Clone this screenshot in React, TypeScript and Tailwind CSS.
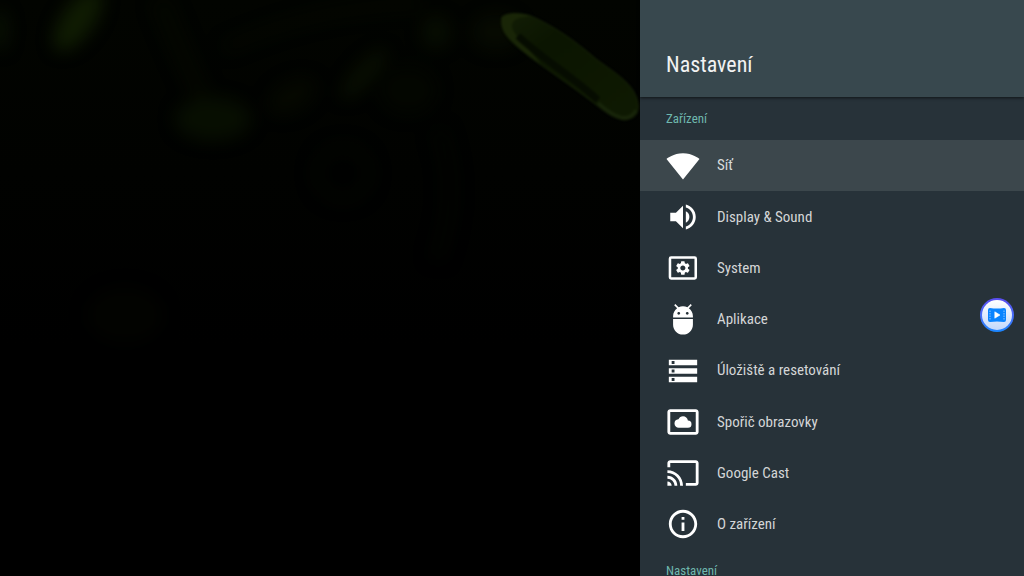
import type { ReactNode } from "react";
import {
  MdAdb,
  MdCast,
  MdInfoOutline,
  MdSettings,
  MdSettingsSystemDaydream,
  MdSignalWifi4Bar,
  MdStorage,
  MdVolumeUp,
} from "react-icons/md";

function SystemIcon() {
  return (
    <svg viewBox="0 0 24 24" className="size-[34px]" fill="currentColor" aria-hidden="true">
      <rect x="2.8" y="4.6" width="18.2" height="14.8" rx="0.8" fill="none" stroke="currentColor" strokeWidth="1.8" />
      <MdSettings x="5.9" y="6" size={12} />
    </svg>
  );
}

const items: { label: string; icon: ReactNode }[] = [
  { label: "Síť", icon: <MdSignalWifi4Bar size={34} /> },
  { label: "Display & Sound", icon: <MdVolumeUp size={34} /> },
  { label: "System", icon: <SystemIcon /> },
  { label: "Aplikace", icon: <MdAdb size={34} /> },
  { label: "Úložiště a resetování", icon: <MdStorage size={34} /> },
  { label: "Spořič obrazovky", icon: <MdSettingsSystemDaydream size={34} /> },
  { label: "Google Cast", icon: <MdCast size={34} /> },
  { label: "O zařízení", icon: <MdInfoOutline size={34} /> },
];

function Backdrop() {
  return (
    <svg
      viewBox="0 0 640 576"
      preserveAspectRatio="xMidYMin slice"
      className="h-full w-full"
      aria-hidden="true"
    >
      <defs>
        <filter
          id="soft"
          filterUnits="userSpaceOnUse"
          x="-40"
          y="-40"
          width="720"
          height="460"
          colorInterpolationFilters="sRGB"
        >
          <feGaussianBlur stdDeviation="8" />
        </filter>
        <filter id="edge" colorInterpolationFilters="sRGB">
          <feGaussianBlur stdDeviation="1" />
        </filter>
        <linearGradient id="haze" x1="0" y1="0" x2="0" y2="1">
          <stop offset="0" stopColor="#020400" />
          <stop offset="0.6" stopColor="#000000" />
        </linearGradient>
        <linearGradient id="leaf" x1="0" y1="0" x2="1" y2="1">
          <stop offset="0" stopColor="#131e06" />
          <stop offset="0.3" stopColor="#0b1501" />
          <stop offset="1" stopColor="#0f1a02" />
        </linearGradient>
      </defs>
      <rect width="640" height="576" fill="url(#haze)" />
      <g filter="url(#soft)">
        <ellipse cx="78" cy="20" rx="16" ry="36" transform="rotate(35 78 20)" fill="#0f1b02" />
        <ellipse cx="0" cy="30" rx="8" ry="20" fill="#081002" />
        <path d="M160 0 Q178 48 208 110" stroke="#040700" strokeWidth="18" fill="none" />
        <ellipse cx="213" cy="119" rx="38" ry="22" fill="#070e01" />
        <ellipse cx="292" cy="96" rx="26" ry="15" transform="rotate(-30 292 96)" fill="#050800" />
        <ellipse cx="364" cy="74" rx="32" ry="10" transform="rotate(-48 364 74)" fill="#080e01" />
        <ellipse cx="436" cy="32" rx="14" ry="16" fill="#070d01" />
        <ellipse cx="496" cy="32" rx="24" ry="18" fill="#060a01" />
        <ellipse cx="408" cy="90" rx="28" ry="24" fill="#030600" />
        <path d="M225 48 Q310 8 420 4" stroke="#040700" strokeWidth="10" fill="none" />
        <circle cx="343" cy="173" r="26" stroke="#030500" strokeWidth="9" fill="none" />
        <path d="M438 130 Q462 190 436 260" stroke="#020400" strokeWidth="14" fill="none" />
        <ellipse cx="125" cy="315" rx="38" ry="28" fill="#020300" />
      </g>
      <g filter="url(#edge)">
        <path
          d="M502 17 C508 12 522 13 531 16 C553 26 573 39 596 59 C612 71 632 82 637 99 C641 113 635 119 624 120 C612 118 604 111 594 103 C573 87 551 72 530 57 C514 44 499 33 502 17 Z"
          fill="url(#leaf)"
          stroke="#172408"
          strokeWidth="1"
        />
        <path
          d="M502 17 C508 12 522 13 531 16 C518 17 509 20 513 30 C519 42 532 51 541 64 C517 47 497 34 502 17 Z"
          fill="#192507"
        />
        <path d="M518 36 C540 57 572 76 598 100" stroke="#060c01" strokeWidth="7" fill="none" />
        <path d="M598 103 C614 117 629 124 636 110" stroke="#18250a" strokeWidth="3" fill="none" />
      </g>
    </svg>
  );
}

export default function App() {
  return (
    <div className="relative flex h-screen overflow-hidden bg-black font-['Roboto_Condensed','Liberation_Sans_Narrow',Roboto,sans-serif]">
      <div className="min-w-0 flex-1">
        <Backdrop />
      </div>

      <main className="flex w-3/8 flex-col bg-[#273239]">
        <header className="z-10 flex h-[97px] shrink-0 items-end bg-[#38484e] px-[26px] pb-[18px] shadow-[0_1px_3px_rgba(0,0,0,0.6)]">
          <h1 className="text-[22px] leading-7 text-[#f2f2f2]">Nastavení</h1>
        </header>

        <h2 className="flex h-[43px] shrink-0 items-center px-[26px] text-[13px] text-[#6fb8ae]">
          Zařízení
        </h2>
        <ul className="grid flex-1 auto-rows-fr">
          {items.map((item, index) => (
            <li key={item.label} className="grid">
              <button
                type="button"
                className={
                  index === 0
                    ? "flex items-center gap-[17px] bg-[#3c474c] px-[26px] text-left text-[15px] text-[#d8dcdd]"
                    : "flex items-center gap-[17px] px-[26px] text-left text-[15px] text-[#d4d6d7]"
                }
              >
                <span className="shrink-0 text-white">{item.icon}</span>
                {item.label}
              </button>
            </li>
          ))}
        </ul>
        <h2 className="h-[26px] shrink-0 px-[26px] pt-[13px] text-[13px] leading-4 text-[#6fb8ae]">
          Nastavení
        </h2>
      </main>

      <button
        type="button"
        aria-label="Video"
        className="absolute top-[298px] right-[10px] z-20 flex size-[34px] items-center justify-center rounded-full bg-linear-to-b from-[#5a4cf0] to-[#1687ff] p-[2px]"
      >
        <span className="flex size-full items-center justify-center rounded-full bg-linear-to-b from-white to-[#c3d8fb]">
          <svg viewBox="0 0 18 14" className="h-[14px] w-[18px]" aria-hidden="true">
            <path d="M2 0Q9 1 16 0Q18 0 18 2V12Q18 14 16 14Q9 13 2 14Q0 14 0 12V2Q0 0 2 0Z" fill="#0a84ff" />
            <path d="M2 2.5V11.5M16 2.5V11.5" stroke="#8cc4ff" strokeWidth="1" strokeDasharray="1.5 1" />
            <path d="M6.8 3.8L12 7L6.8 10.2Z" fill="#ffffff" stroke="#ffffff" strokeWidth="0.6" strokeLinejoin="round" />
          </svg>
        </span>
      </button>
    </div>
  );
}
